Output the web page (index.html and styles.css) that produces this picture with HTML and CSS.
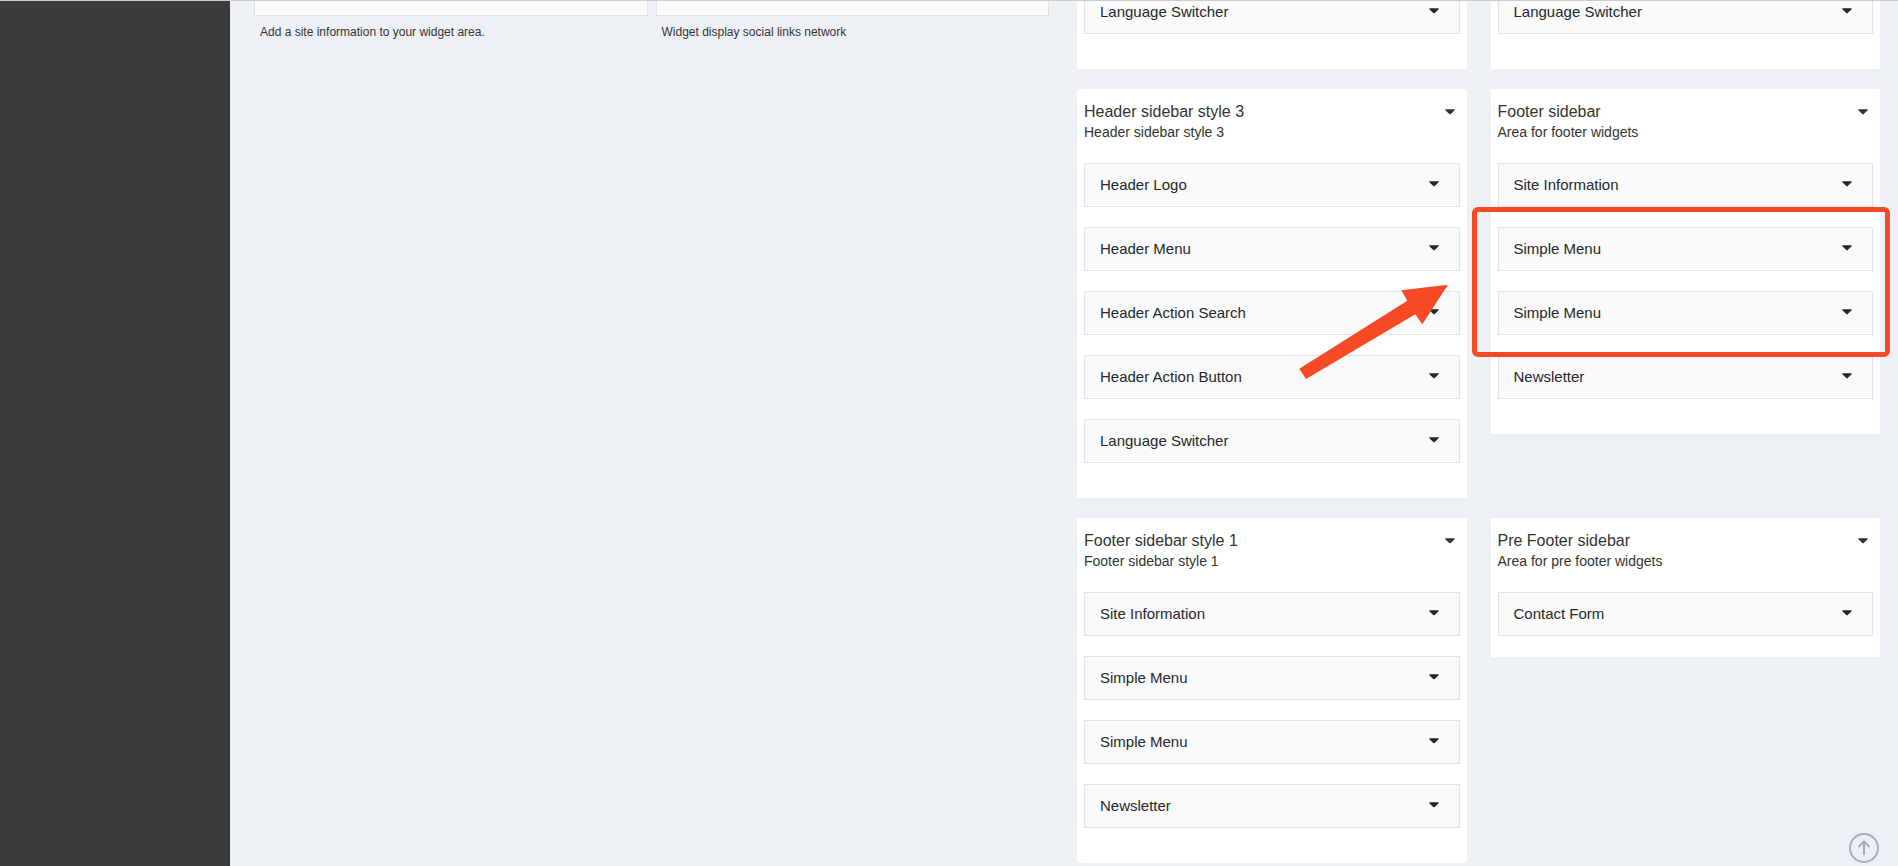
FILE: index.html
```html
<!DOCTYPE html>
<html lang="en">
<head>
<meta charset="utf-8">
<title>Widgets</title>
<link rel="stylesheet" href="styles.css">
</head>
<body class="page">
<svg width="0" height="0" class="defs" aria-hidden="true">
  <symbol id="caret" viewBox="0 0 10 6"><path d="M0.3 0.2H9.7Q9.9 1 9.2 1.7L5.7 5.1Q5 5.8 4.3 5.1L0.8 1.7Q0.1 1 0.3 0.2Z" fill="currentColor"/></symbol>
</svg>
<aside class="sidebar"></aside>
<main class="main">
  <section class="available">
    <div class="available-widget"><div class="available-box"></div><p class="available-text">Add a site information to your widget area.</p></div>
    <div class="available-widget"><div class="available-box"></div><p class="available-text">Widget display social links network</p></div>
  </section>
  <section class="areas">
    <article class="panel panel-cut">
      <button class="widget" type="button">Language Switcher<svg class="caret"><use href="#caret"/></svg></button>
    </article>
    <article class="panel panel-cut">
      <button class="widget" type="button">Language Switcher<svg class="caret"><use href="#caret"/></svg></button>
    </article>

    <article class="panel">
      <header class="panel-head">
        <div><h2 class="panel-title">Header sidebar style 3</h2><p class="panel-text">Header sidebar style 3</p></div>
        <button class="toggle" type="button" aria-label="Toggle Header sidebar style 3"><svg class="caret caret-head"><use href="#caret"/></svg></button>
      </header>
      <button class="widget" type="button">Header Logo<svg class="caret"><use href="#caret"/></svg></button>
      <button class="widget" type="button">Header Menu<svg class="caret"><use href="#caret"/></svg></button>
      <button class="widget" type="button">Header Action Search<svg class="caret"><use href="#caret"/></svg></button>
      <button class="widget" type="button">Header Action Button<svg class="caret"><use href="#caret"/></svg></button>
      <button class="widget" type="button">Language Switcher<svg class="caret"><use href="#caret"/></svg></button>
      <svg class="arrow" viewBox="0 0 150 96" aria-hidden="true"><path d="M149 0.7L102.3 6.3L108.3 16.7L0.3 84.7L7 94.9L116.3 30.3L123.3 40.3Z" fill="#f54a25"/></svg>
    </article>
    <article class="panel">
      <header class="panel-head">
        <div><h2 class="panel-title">Footer sidebar</h2><p class="panel-text">Area for footer widgets</p></div>
        <button class="toggle" type="button" aria-label="Toggle Footer sidebar"><svg class="caret caret-head"><use href="#caret"/></svg></button>
      </header>
      <button class="widget" type="button">Site Information<svg class="caret"><use href="#caret"/></svg></button>
      <button class="widget" type="button">Simple Menu<svg class="caret"><use href="#caret"/></svg></button>
      <button class="widget" type="button">Simple Menu<svg class="caret"><use href="#caret"/></svg></button>
      <button class="widget" type="button">Newsletter<svg class="caret"><use href="#caret"/></svg></button>
      <div class="highlight"></div>
    </article>

    <article class="panel">
      <header class="panel-head">
        <div><h2 class="panel-title">Footer sidebar style 1</h2><p class="panel-text">Footer sidebar style 1</p></div>
        <button class="toggle" type="button" aria-label="Toggle Footer sidebar style 1"><svg class="caret caret-head"><use href="#caret"/></svg></button>
      </header>
      <button class="widget" type="button">Site Information<svg class="caret"><use href="#caret"/></svg></button>
      <button class="widget" type="button">Simple Menu<svg class="caret"><use href="#caret"/></svg></button>
      <button class="widget" type="button">Simple Menu<svg class="caret"><use href="#caret"/></svg></button>
      <button class="widget" type="button">Newsletter<svg class="caret"><use href="#caret"/></svg></button>
    </article>
    <article class="panel panel-short">
      <header class="panel-head">
        <div><h2 class="panel-title">Pre Footer sidebar</h2><p class="panel-text">Area for pre footer widgets</p></div>
        <button class="toggle" type="button" aria-label="Toggle Pre Footer sidebar"><svg class="caret caret-head"><use href="#caret"/></svg></button>
      </header>
      <button class="widget" type="button">Contact Form<svg class="caret"><use href="#caret"/></svg></button>
    </article>
  </section>
</main>
<a class="to-top" href="#" aria-label="Back to top">
  <svg class="to-top-icon" viewBox="0 0 32 32" fill="none" stroke="#a3afbf" stroke-width="2"><circle cx="16" cy="16" r="14"/><path d="M16 23V9.5M10.5 15L16 9.5L21.5 15"/></svg>
</a>
</body>
</html>
```

FILE: styles.css
```css
* { box-sizing: border-box; }

.page {
  display: flex;
  min-height: 100vh;
  margin: 0;
  overflow: hidden;
  border-top: 1px solid #cbcbcb;
  background: #edf1f6;
  color: #333;
  font-family: "Liberation Sans", Arial, sans-serif;
}

.defs { position: absolute; }

.sidebar {
  flex: 0 0 230px;
  background: #3c3c3c;
}

.main {
  flex: 1;
  display: grid;
  grid-template-columns: 1fr 1fr;
  align-items: start;
}

.available {
  display: grid;
  grid-template-columns: 1fr 1fr;
  gap: 8px;
  padding: 0 15px 0 24px;
}

.available-box {
  height: 15px;
  border: 1px solid #e1e1e1;
  border-top: 0;
  background: #fafafa;
}

.available-text {
  margin: 8px 6px;
  font-size: 12px;
  line-height: 16px;
}

.areas {
  display: grid;
  grid-template-columns: 1fr 1fr;
  align-items: start;
  gap: 20px 24px;
  padding: 0 18px 0 13px;
}

.panel {
  position: relative;
  display: flex;
  flex-direction: column;
  gap: 20px;
  padding: 13px 7px 35px;
  background: #fff;
}

.panel-short { padding-bottom: 21px; }

.panel-cut {
  margin-top: -11px;
  padding-top: 0;
}

.panel-head {
  display: flex;
  justify-content: space-between;
  align-items: flex-start;
  padding-bottom: 1px;
}

.panel-title {
  margin: 0;
  font-size: 16px;
  font-weight: 400;
  line-height: 20px;
}

.panel-text {
  margin: 0;
  font-size: 14px;
  line-height: 20px;
}

.toggle {
  padding: 7px 5px;
  border: 0;
  background: none;
  color: #333;
  line-height: 0;
}

.widget {
  display: flex;
  justify-content: space-between;
  align-items: center;
  height: 44px;
  padding: 0 20px 2px 15px;
  border: 1px solid #e1e3e4;
  background: #fafafa;
  color: #23282d;
  font-family: inherit;
  font-size: 15px;
  text-align: left;
}

.caret {
  width: 10px;
  height: 6px;
}

.arrow {
  position: absolute;
  top: 195px;
  right: 18px;
  width: 150px;
  height: 96px;
}

.highlight {
  position: absolute;
  top: 118px;
  right: -10px;
  left: -19px;
  height: 150px;
  border: 5px solid #f54a25;
  border-radius: 6px;
}

.to-top {
  position: fixed;
  right: 18px;
  bottom: 2px;
  width: 32px;
  height: 32px;
}

.to-top-icon {
  display: block;
  width: 32px;
  height: 32px;
}
```
